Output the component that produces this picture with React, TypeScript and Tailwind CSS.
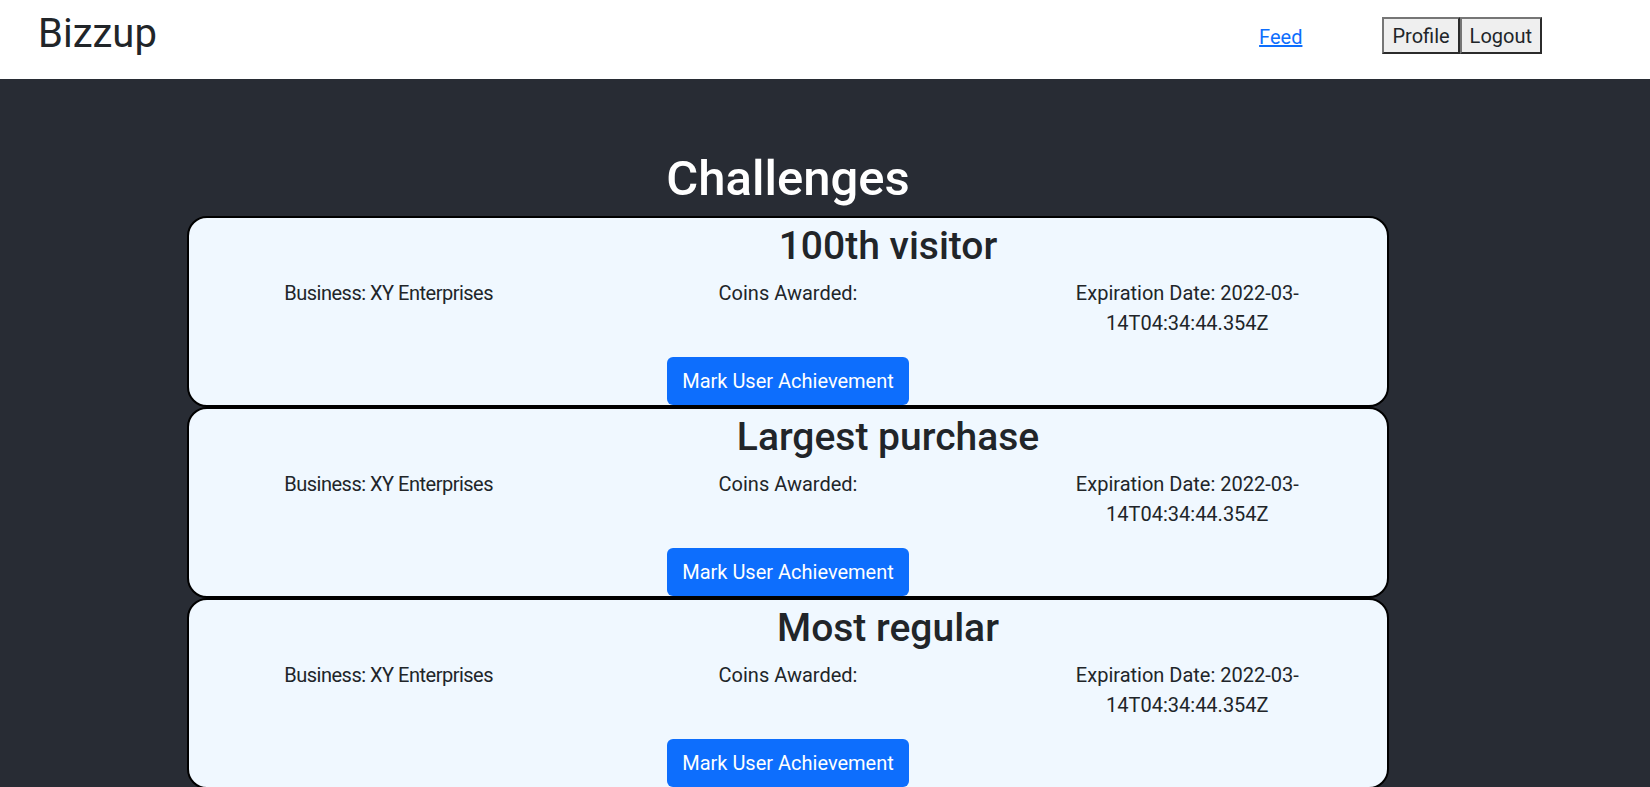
const challenges = [
  { title: '100th visitor', business: 'XY Enterprises', date: ['2022-03-', '14T04:34:44.354Z'] },
  { title: 'Largest purchase', business: 'XY Enterprises', date: ['2022-03-', '14T04:34:44.354Z'] },
  { title: 'Most regular', business: 'XY Enterprises', date: ['2022-03-', '14T04:34:44.354Z'] },
]

function Header() {
  return (
    <header className="flex h-[79px] items-start bg-white pl-[38px] pr-[108px]">
      <h1 className="mt-[14px] text-[40px] leading-none text-[#212529]">Bizzup</h1>
      <div className="flex-1" />
      <a href="#" className="mr-[80px] mt-[22px] text-[20px] leading-[30px] text-[#0d6efd] underline">
        Feed
      </a>
      <div className="mt-[17px] flex h-[37px]">
        <button className="border-2 border-t-[#767676] border-l-[#767676] border-b-[#2b2b2b] border-r-[#2b2b2b] bg-[#efefef] px-[8px] text-[20px] text-[#212529]">
          Profile
        </button>
        <button className="border-2 border-t-[#767676] border-l-[#767676] border-b-[#2b2b2b] border-r-[#2b2b2b] bg-[#efefef] px-[8px] text-[20px] text-[#212529]">
          Logout
        </button>
      </div>
    </header>
  )
}

function ChallengeCard({ title, business, date }: { title: string; business: string; date: string[] }) {
  return (
    <div className="flex flex-col items-center rounded-[20px] border-2 border-black bg-[#f0f8ff] pt-[5px] text-[#212529]">
      <h2 className="w-full pl-[200px] text-center text-[39px] font-medium leading-[46px]">{title}</h2>
      <div className="mt-[9px] grid w-full grid-cols-3 text-center text-[20px] leading-[30px]">
        <p className="tracking-[-0.5px]">Business: {business}</p>
        <p>Coins Awarded:</p>
        <p>
          Expiration Date: {date[0]}
          <br />
          {date[1]}
        </p>
      </div>
      <button className="mt-[19px] h-[48px] rounded-[6px] bg-[#0d6efd] px-[15px] text-[20px] text-white">
        Mark User Achievement
      </button>
    </div>
  )
}

export default function App() {
  return (
    <div className="min-h-[787px] bg-[#282c34] font-['Roboto',sans-serif]">
      <Header />
      <main className="ml-[187px] w-[1202px] pt-[72px]">
        <h1 className="mb-[10px] text-center text-[49px] font-medium leading-[55px] text-white">Challenges</h1>
        {challenges.map((c) => (
          <ChallengeCard key={c.title} {...c} />
        ))}
      </main>
    </div>
  )
}
